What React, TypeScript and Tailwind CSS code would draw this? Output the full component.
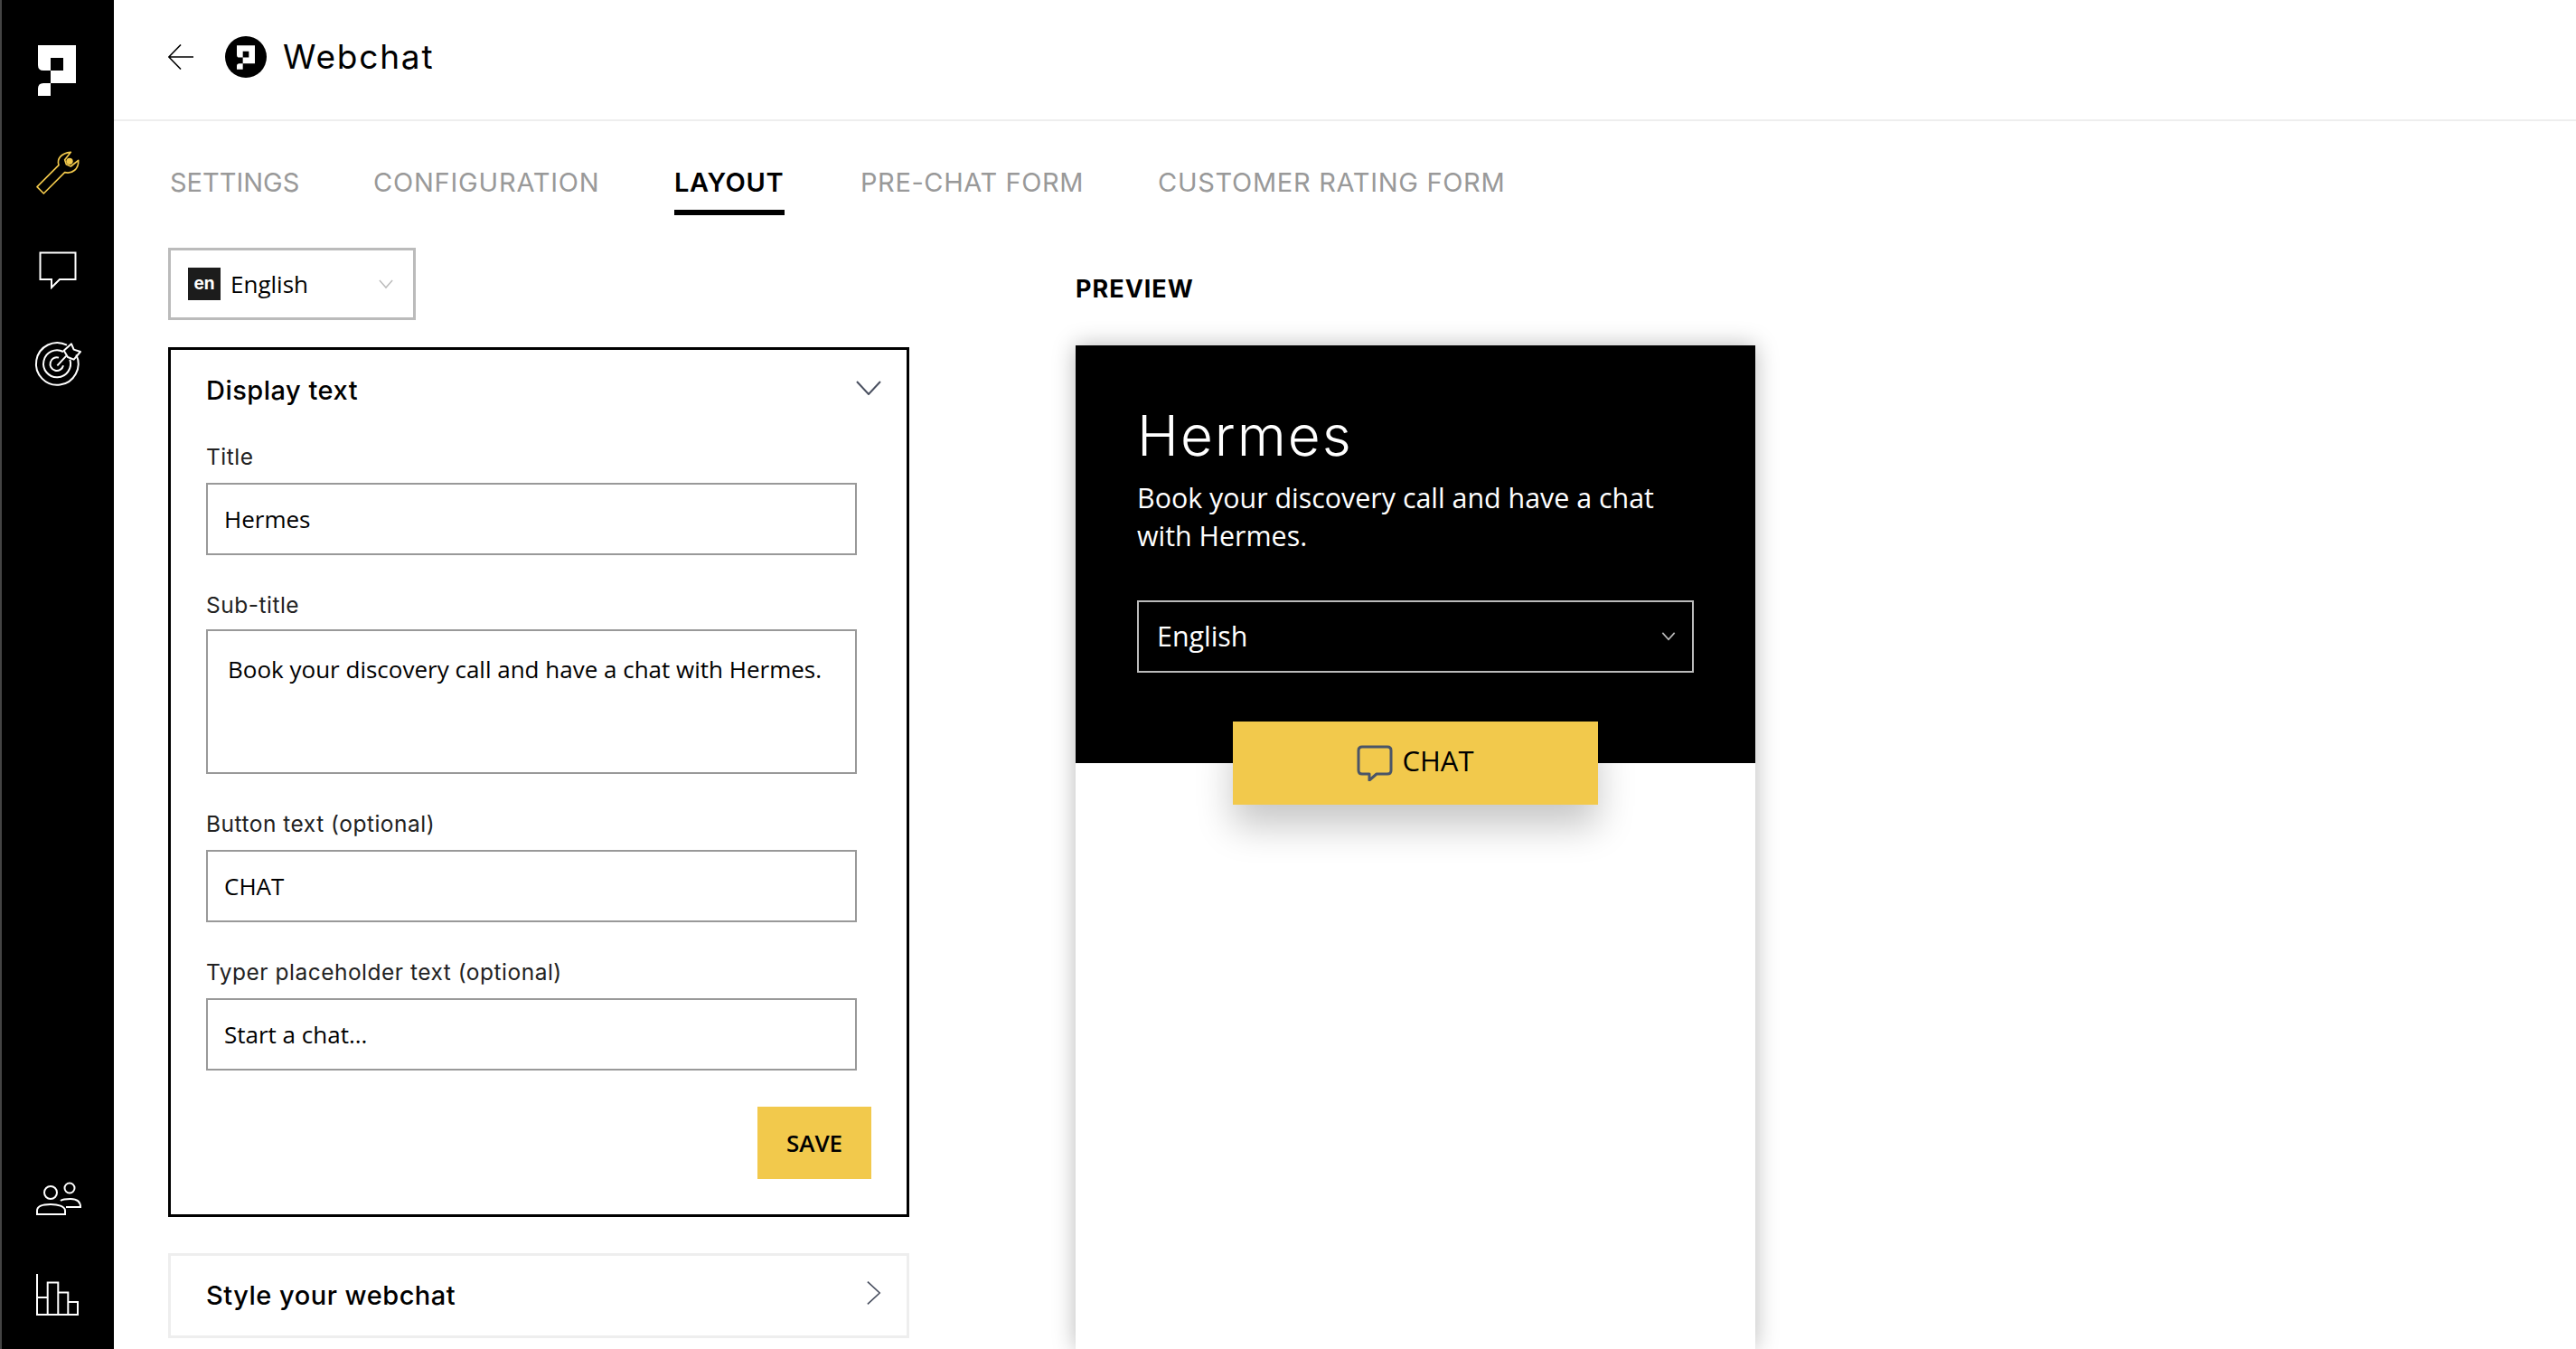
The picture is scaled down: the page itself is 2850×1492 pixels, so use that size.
const MONT = "font-['Inter',sans-serif]";
const OPEN = "font-['Open_Sans',sans-serif]";

const TABS = [
  { label: "SETTINGS", width: "w-[141px]", active: false },
  { label: "CONFIGURATION", width: "w-[249px] tracking-[0.8px]", active: false },
  { label: "LAYOUT", width: "w-[122px] tracking-[0.6px]", active: true },
  { label: "PRE-CHAT FORM", width: "w-[245px] tracking-[0.6px]", active: false },
  { label: "CUSTOMER RATING FORM", width: "w-[381px] tracking-[0.7px]", active: false },
];

function Logo({ className, fill }: { className: string; fill: string }) {
  return (
    <svg viewBox="0 0 42 56" className={className} fill={fill}>
      <path fillRule="evenodd" d="M0 0H42V42H14V28H6Q0 28 0 22ZM14 14V28H28V14Z" />
      <path d="M0 56V48Q0 42 6 42H14V56Z" />
    </svg>
  );
}

function SideIcons() {
  return (
    <aside className="w-[126px] h-full bg-black border-l-2 border-[#444] flex flex-col items-center shrink-0">
      <Logo className="w-[42px] h-[56px] mt-[50px] -ml-[2px]" fill="#fff" />
      {/* wrench */}
      <svg viewBox="0 0 240 240" className="w-[80px] h-[80px] mt-[44px] ml-[12px]" fill="none" stroke="#F2C94C" strokeWidth="5" strokeLinejoin="round">
        <path d="M33 170L105 98C98 78 112 58 145 55L125 80L130 95L145 102L170 82C172 110 150 128 125 122L55 192Z" />
        <circle cx="141" cy="85" r="11" fill="#F2C94C" stroke="none" />
      </svg>
      {/* speech bubble */}
      <svg viewBox="0 0 42 42" className="w-[42px] h-[42px] mt-[48px]" fill="none" stroke="#fff" strokeWidth="2">
        <path d="M1.5 1.5H40.5V31H23L14 40V31H1.5Z" />
      </svg>
      {/* target */}
      <svg viewBox="0 0 240 240" className="w-[80px] h-[80px] mt-[45px] ml-[12px]" fill="none" stroke="#fff" strokeWidth="6" strokeLinejoin="round">
        <path d="M132 50A70 70 0 1 0 163 82" />
        <path d="M120 72A45 45 0 1 0 142 98" />
        <path d="M105 92A22 22 0 1 0 120 118" />
        <path d="M100 118L130 86" />
        <path d="M122 68L147 46L155 65L177 72L155 98L135 90Z" />
      </svg>
      <div className="flex-1" />
      {/* people */}
      <svg viewBox="0 0 50 38" className="w-[50px] h-[38px] ml-[2px]" fill="none" stroke="#fff" strokeWidth="2">
        <circle cx="16" cy="12" r="7" />
        <circle cx="37" cy="7" r="5.5" />
        <path d="M1 36V32C1 27 8 25 16 25C24 25 32 27 32 32V36Z" />
        <path d="M27 21C29 19.5 33 19 38 19C45 19 49 22 49 28H33" />
      </svg>
      {/* bars */}
      <svg viewBox="0 0 48 48" className="w-[48px] h-[48px] mt-[64px] mb-[35px]" fill="none" stroke="#fff" strokeWidth="2">
        <path d="M1 0V45H46V31H35.3M35.3 45V20.5H24.3M24.3 45V9.5H12.7V45M1 26H12.7" />
      </svg>
    </aside>
  );
}

function Field({ label, value, mt }: { label: string; value: string; mt: string }) {
  return (
    <div className={mt}>
      <div className={`${MONT} text-[24.5px] leading-[28px] tracking-[0.5px] text-[#222] font-normal`}>{label}</div>
      <input
        readOnly
        value={value}
        className={`${OPEN} mt-[15px] block w-[720px] h-[80px] border-2 border-[#999] pl-[18px] text-[26px] text-black outline-none`}
      />
    </div>
  );
}

export default function App() {
  return (
    <div className="flex w-[2850px] h-[1492px] overflow-hidden bg-white">
      <SideIcons />
      <main className="flex-1 min-w-0 flex flex-col">
        {/* Header */}
        <header className="h-[134px] border-b-2 border-[#eee] flex items-center pl-[60px] pb-[6px] shrink-0">
          <svg viewBox="0 0 28 28" className="w-[28px] h-[28px]" fill="none" stroke="#000" strokeWidth="1.6">
            <path d="M14 0.5L0.8 14L14 27.5M0.8 14H28" />
          </svg>
          <div className="w-[46px] h-[46px] rounded-full bg-black ml-[35px] flex items-center justify-center">
            <Logo className="w-[20px] h-[27px]" fill="#fff" />
          </div>
          <span className={`${MONT} text-[37px] tracking-[1.8px] font-normal ml-[18px] text-black`}>Webchat</span>
        </header>

        {/* Tabs */}
        <nav className={`${MONT} flex gap-[84px] ml-[62px] mt-[46px] text-[29px] shrink-0`}>
          {TABS.map((t) => (
            <div
              key={t.label}
              className={
                t.active
                  ? `${t.width} h-[58px] border-b-[6px] border-black font-semibold text-black whitespace-nowrap`
                  : `${t.width} h-[58px] text-[#999] whitespace-nowrap`
              }
            >
              {t.label}
            </div>
          ))}
        </nav>

        <div className="flex flex-1 min-h-0 ml-[60px]">
          {/* Left column */}
          <div className="w-[820px] shrink-0">
            <div className="mt-[36px] w-[274px] h-[80px] border-[3px] border-[#bbb] flex items-center pl-[19px]">
              <span className={`${MONT} w-[36px] h-[36px] bg-[#1c1c1c] text-white text-[19px] font-bold flex items-center justify-center`}>en</span>
              <span className={`${OPEN} text-[26px] ml-[11px] text-black`}>English</span>
              <svg viewBox="0 0 18 12" className="w-[16px] h-[11px] ml-[78px]" fill="none" stroke="#bbb" strokeWidth="1.6">
                <path d="M1 1L9 10L17 1" />
              </svg>
            </div>

            <section className="relative mt-[30px] h-[962px] border-[3px] border-black px-[39px] pt-[27px]">
              <div className={`${MONT} text-[29px] leading-[36px] tracking-[0.5px] font-medium text-black`}>Display text</div>
              <svg viewBox="0 0 28 16" className="absolute top-[34px] right-[28px] w-[28px] h-[16px]" fill="none" stroke="#4a5060" strokeWidth="2">
                <path d="M1 1L14 15L27 1" />
              </svg>
              <Field label="Title" value="Hermes" mt="mt-[41px]" />
              <div className="mt-[41px]">
                <div className={`${MONT} text-[24.5px] leading-[28px] tracking-[0.5px] text-[#222]`}>Sub-title</div>
                <textarea
                  readOnly
                  value="Book your discovery call and have a chat with Hermes."
                  className={`${OPEN} mt-[13px] block w-[720px] h-[160px] border-2 border-[#999] pl-[22px] pt-[24px] text-[26px] leading-[36px] text-black outline-none resize-none`}
                />
              </div>
              <Field label="Button text (optional)" value="CHAT" mt="mt-[41px]" />
              <Field label="Typer placeholder text (optional)" value="Start a chat..." mt="mt-[41px]" />
              <div className="flex justify-end mt-[40px]">
                <button className={`${OPEN} w-[126px] h-[80px] bg-[#F2C94C] text-[26px] font-semibold text-black`}>SAVE</button>
              </div>
            </section>

            <section className="mt-[40px] h-[94px] border-[3px] border-[#eee] flex items-center justify-between pl-[39px] pr-[28px]">
              <span className={`${MONT} text-[29px] tracking-[0.5px] font-medium text-black`}>Style your webchat</span>
              <svg viewBox="0 0 18 30" className="w-[16px] h-[28px] -mt-[6px]" fill="none" stroke="#4a5060" strokeWidth="1.8">
                <path d="M1 1L16 15L1 29" />
              </svg>
            </section>
          </div>

          {/* Preview */}
          <div className="ml-[184px] w-[752px] shrink-0 flex flex-col min-h-0">
            <div className={`${MONT} mt-[60px] h-[44px] leading-[44px] text-[27px] tracking-[1px] font-bold text-black`}>PREVIEW</div>
            <div className="mt-[40px] flex-1 bg-white shadow-[0_0_24px_rgba(0,0,0,0.28)]">
              <div className="h-[462px] bg-black px-[68px] pt-[65px]">
                <div className={`${MONT} text-[62px] leading-[70px] tracking-[2px] font-light text-white`}>Hermes</div>
                <p className={`${OPEN} mt-[13px] text-[30.4px] leading-[42px] text-white`}>Book your discovery call and have a chat with Hermes.</p>
                <div className="mt-[50px] h-[80px] border-2 border-[#bbb] flex items-center justify-between pl-[20px] pr-[18px]">
                  <span className={`${OPEN} text-[30.4px] text-white`}>English</span>
                  <svg viewBox="0 0 18 12" className="w-[16px] h-[10px]" fill="none" stroke="#bbb" strokeWidth="2">
                    <path d="M1 1L9 10L17 1" />
                  </svg>
                </div>
              </div>
              <button className={`${OPEN} relative z-10 -mt-[46px] ml-[174px] w-[404px] h-[92px] pb-[6px] bg-[#F2C94C] flex items-center justify-center gap-[10px] text-[31px] text-black shadow-[0_24px_40px_rgba(0,0,0,0.22)]`}>
                <svg viewBox="0 0 40 40" className="w-[40px] h-[40px] mt-[6px]" fill="none" stroke="#4a5568" strokeWidth="3" strokeLinejoin="round">
                  <path d="M6 2H34Q38 2 38 6V28Q38 32 34 32H22L14 39V32H6Q2 32 2 28V6Q2 2 6 2Z" />
                </svg>
                CHAT
              </button>
            </div>
          </div>
        </div>
      </main>
    </div>
  );
}
